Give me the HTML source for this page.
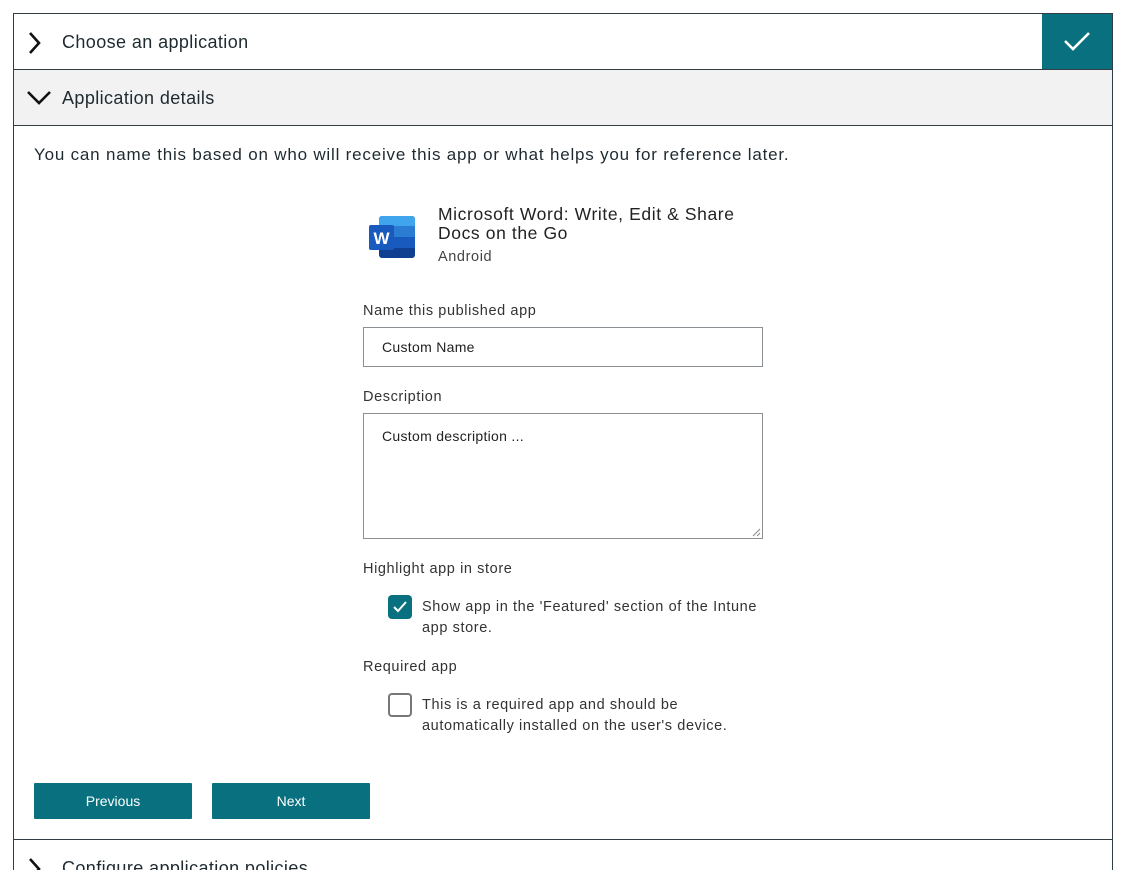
<!DOCTYPE html>
<html><head><meta charset="utf-8"><style>
*{box-sizing:border-box;margin:0;padding:0}
html,body{width:1123px;height:870px;overflow:hidden}
body{background:#fff;font-family:"Liberation Sans",sans-serif;color:#1f2a30;position:relative}
.panel{position:absolute;left:13px;top:13px;width:1100px;height:870px;border:1px solid #333d44;overflow:hidden}
.row{position:absolute;left:0;width:1098px;height:56px;border-bottom:1px solid #333d44;font-size:18px;line-height:56px;padding-left:48px;letter-spacing:0.4px}
.row svg{position:absolute;left:12px;top:17px}
.abs{position:absolute}
.lbl{font-size:14.5px;color:#333;letter-spacing:0.6px}
.inp{position:absolute;border:1px solid #8a8f93;background:#fff;font-size:14px;padding-left:18px;color:#222;letter-spacing:0.3px}
.btn{position:absolute;top:783px;width:158px;height:36px;background:#08707f;color:#fff;font-size:14px;text-align:center;line-height:36px;border-radius:1px}
</style></head><body>
<div class="panel">
 <div class="row" style="top:0">
  <svg width="18" height="24" viewBox="0 0 18 24"><path d="M4 2l9 10-9 10" fill="none" stroke="#111" stroke-width="2.6"/></svg>
  Choose an application
  <div class="abs" style="right:0;top:0;width:70px;height:55px;background:#08707f">
   <svg style="left:21px;top:16px" width="28" height="22" viewBox="0 0 28 22"><path d="M2 11l8 8L26 3" fill="none" stroke="#fff" stroke-width="2.6"/></svg>
  </div>
 </div>
 <div class="row" style="top:56px;background:#f2f2f2">
  <svg style="top:19px" width="26" height="18" viewBox="0 0 26 18"><path d="M2 3l11 11L24 3" fill="none" stroke="#111" stroke-width="2.6"/></svg>
  Application details
 </div>
 <div class="row" style="top:825px;border-top:1px solid #333d44;border-bottom:none">
  <svg width="18" height="24" viewBox="0 0 18 24"><path d="M4 2l9 10-9 10" fill="none" stroke="#111" stroke-width="2.6"/></svg>
  Configure application policies
 </div>
</div>
<div class="abs" style="left:34px;top:145px;font-size:17px;letter-spacing:0.8px">You can name this based on who will receive this app or what helps you for reference later.</div>
<svg class="abs" style="left:368px;top:215px" width="48" height="44" viewBox="0 0 48 44">
 <rect x="11" y="1" width="36" height="42" rx="3" fill="#103f91"/>
 <rect x="11" y="1" width="36" height="12" rx="3" fill="#41a5ee"/>
 <rect x="11" y="11" width="36" height="11" fill="#2b7cd3"/>
 <rect x="11" y="22" width="36" height="11" fill="#185abd"/>
 <rect x="1" y="10" width="25" height="25" rx="2" fill="#185abd"/>
 <text x="13.5" y="29" font-size="17" font-weight="bold" fill="#fff" text-anchor="middle" font-family="Liberation Sans">W</text>
</svg>
<div class="abs" style="left:438px;top:205px;font-size:17.5px;line-height:19px;color:#222;letter-spacing:0.6px">Microsoft Word: Write, Edit &amp; Share<br>Docs on the Go</div>
<div class="abs lbl" style="left:438px;top:249px;color:#444">Android</div>
<div class="abs lbl" style="left:363px;top:303px">Name this published app</div>
<div class="inp" style="left:363px;top:327px;width:400px;height:40px;line-height:38px">Custom Name</div>
<div class="abs lbl" style="left:363px;top:389px">Description</div>
<div class="inp" style="left:363px;top:413px;width:400px;height:126px;padding-top:14px">Custom description ...</div>
<svg class="abs" style="left:752px;top:528px" width="9" height="9"><path d="M1 8L8 1M5 8L8 5" stroke="#888" stroke-width="1"/></svg>
<div class="abs lbl" style="left:363px;top:561px">Highlight app in store</div>
<div class="abs" style="left:388px;top:595px;width:24px;height:24px;background:#08707f;border-radius:4px">
 <svg width="24" height="24"><path d="M6 12l4 4 8-9" fill="none" stroke="#fff" stroke-width="2"/></svg></div>
<div class="abs lbl" style="left:422px;top:597px;line-height:21px">Show app in the 'Featured' section of the Intune<br>app store.</div>
<div class="abs lbl" style="left:363px;top:659px">Required app</div>
<div class="abs" style="left:388px;top:693px;width:24px;height:24px;border:2px solid #777;border-radius:4px"></div>
<div class="abs lbl" style="left:422px;top:695px;line-height:21px">This is a required app and should be<br>automatically installed on the user's device.</div>
<div class="btn" style="left:34px">Previous</div>
<div class="btn" style="left:212px">Next</div>
</body></html>
